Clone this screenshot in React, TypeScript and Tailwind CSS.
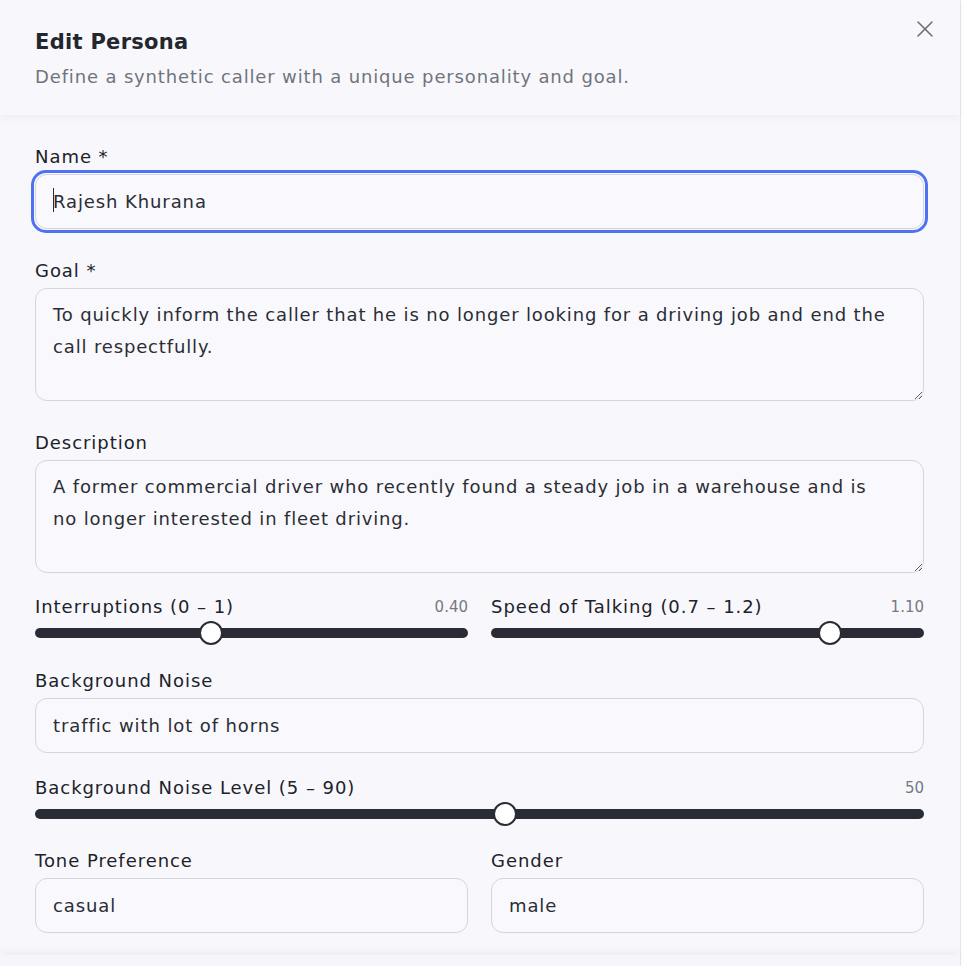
import { X } from "lucide-react";

const font = { fontFamily: '"DejaVu Sans", "Open Sans", sans-serif' };

const Label = ({ children }: { children: React.ReactNode }) => (
  <div className="h-[26px] leading-[26px] text-[18px] text-[#202229] tracking-[0.95px]">
    {children}
  </div>
);

const TextInput = ({ value }: { value: string }) => (
  <input
    readOnly
    defaultValue={value}
    className="mt-[4px] w-full h-[55px] rounded-[12px] border border-[#d3d6dd] bg-[#f9f9fd] px-[17px] text-[18px] tracking-[0.9px] text-[#2b2d35] outline-none"
    style={font}
  />
);

const TextArea = ({ value }: { value: string }) => (
  <textarea
    readOnly
    defaultValue={value}
    className="mt-[4px] block w-full h-[113px] rounded-[12px] border border-[#d3d6dd] bg-[#f9f9fd] pl-[17px] pr-[28px] pt-[10px] text-[18px] tracking-[0.85px] leading-[32px] text-[#2b2d35] outline-none"
    style={font}
  />
);

const Slider = ({
  label,
  value,
  min,
  max,
  display,
}: {
  label: string;
  value: number;
  min: number;
  max: number;
  display: string;
}) => {
  const pct = (value - min) / (max - min);
  return (
    <div className="flex flex-col">
      <div className="flex items-center justify-between">
        <Label>{label}</Label>
        <span className="text-[15px] text-[#767982]">{display}</span>
      </div>
      <div className="relative h-[24px] mt-[1px]">
        <div className="absolute left-0 right-0 top-[7px] h-[10px] rounded-full bg-[#2a2c35]" />
        <div
          className="absolute top-0 h-[24px] w-[24px] rounded-full border-2 border-[#2a2c35] bg-white"
          style={{ left: `calc(${pct} * (100% - 24px))` }}
        />
      </div>
    </div>
  );
};

export default function App() {
  return (
    <div className="w-[964px] h-[966px] bg-white overflow-hidden" style={font}>
      <div className="w-[961px] h-full bg-[#f8f8fc] border-r border-[#e4e6eb] flex flex-col">
        <div className="relative z-10 px-[35px] pt-[27px] pb-[24px] shadow-[0_3px_8px_rgba(30,35,60,0.05)]">
          <h2 className="h-[30px] leading-[30px] text-[21px] font-bold tracking-[0.3px] text-[#24262e]">
            Edit Persona
          </h2>
          <p className="mt-[6px] h-[28px] leading-[28px] text-[18px] tracking-[0.85px] text-[#71747d]">
            Define a synthetic caller with a unique personality and goal.
          </p>
          <button className="absolute right-[21px] top-[15px] text-[#6b6e77]">
            <X size={28} strokeWidth={1.3} />
          </button>
        </div>

        <div className="flex-1 pl-[35px] pr-[36px] pt-[29px] flex flex-col">
          <Label>Name *</Label>
          <div className="relative">
            <TextInput value="Rajesh Khurana" />
            <div className="pointer-events-none absolute -left-[4px] -right-[4px] top-0 -bottom-[4px] rounded-[15px] border-[3px] border-[#4f72f4]" />
            <span className="absolute left-[18px] top-[18px] h-[24px] w-[1px] bg-[#2b2d35]" />
          </div>

          <div className="mt-[29px]">
            <Label>Goal *</Label>
            <TextArea value="To quickly inform the caller that he is no longer looking for a driving job and end the call respectfully." />
          </div>

          <div className="mt-[29px]">
            <Label>Description</Label>
            <TextArea value="A former commercial driver who recently found a steady job in a warehouse and is no longer interested in fleet driving." />
          </div>

          <div className="mt-[21px] grid grid-cols-2 gap-[23px]">
            <Slider label="Interruptions (0 – 1)" value={0.4} min={0} max={1} display="0.40" />
            <Slider label="Speed of Talking (0.7 – 1.2)" value={1.1} min={0.7} max={1.2} display="1.10" />
          </div>

          <div className="mt-[23px]">
            <Label>Background Noise</Label>
            <TextInput value="traffic with lot of horns" />
          </div>

          <div className="mt-[22px]">
            <Slider label="Background Noise Level (5 – 90)" value={50} min={5} max={90} display="50" />
          </div>

          <div className="mt-[22px] grid grid-cols-2 gap-[23px]">
            <div>
              <Label>Tone Preference</Label>
              <TextInput value="casual" />
            </div>
            <div>
              <Label>Gender</Label>
              <TextInput value="male" />
            </div>
          </div>
        </div>

        <div className="h-[11px] shadow-[0_-3px_8px_rgba(30,35,60,0.05)] bg-[#f6f6fa]" />
      </div>
    </div>
  );
}
